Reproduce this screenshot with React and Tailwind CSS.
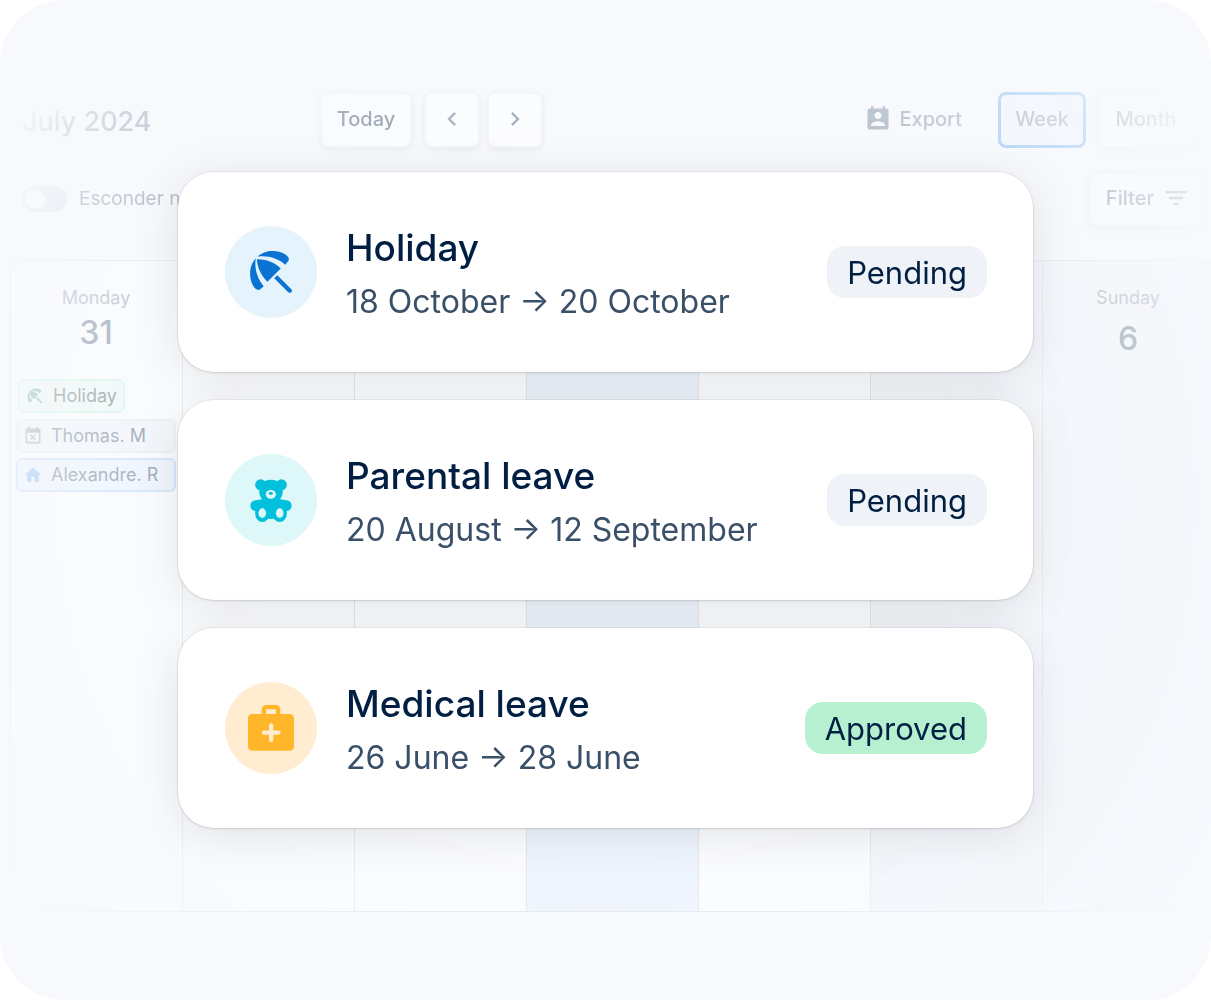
import {
  MdBeachAccess,
  MdChevronLeft,
  MdChevronRight,
  MdEventBusy,
  MdFilterList,
  MdHome,
  MdPermContactCalendar,
} from "react-icons/md";

const days = [
  { name: "Monday", date: "31", tone: "bg-white" },
  { tone: "bg-white" },
  { tone: "bg-white" },
  { tone: "bg-[#e9f2fe]" },
  { tone: "bg-white" },
  { tone: "bg-[#f1f4f9]" },
  { name: "Sunday", date: "6", tone: "bg-[#f1f4f9]" },
];

const events = [
  {
    label: "Holiday",
    icon: MdBeachAccess,
    box: "mx-0.5 mb-px self-start border-[#c3f3da] bg-[#e9fcf2] text-[#1f3a34]",
    iconColor: "text-[#2f9464]",
  },
  {
    label: "Thomas. M",
    icon: MdEventBusy,
    box: "border-[#e2e8ef] bg-[#eff3f8] text-[#344a63]",
    iconColor: "text-[#6b7c90]",
  },
  {
    label: "Alexandre. R",
    icon: MdHome,
    box: "border-[#aed2fb] bg-[#e9f2fe] text-[#344a63]",
    iconColor: "text-[#4f9bf5]",
  },
];

const requests = [
  {
    title: "Holiday",
    from: "18 October",
    to: "20 October",
    status: "Pending",
    pill: "bg-[#eff3f8]",
    circle: "bg-[#e5f3fd]",
    icon: UmbrellaIcon,
  },
  {
    title: "Parental leave",
    from: "20 August",
    to: "12 September",
    status: "Pending",
    pill: "bg-[#eff3f8]",
    circle: "bg-[#def7f9]",
    icon: TeddyIcon,
  },
  {
    title: "Medical leave",
    from: "26 June",
    to: "28 June",
    status: "Approved",
    pill: "bg-[#b7f0d0]",
    circle: "bg-[#ffecd1]",
    icon: MedicalIcon,
  },
];

function UmbrellaIcon() {
  return (
    <svg viewBox="0 0 123 123" className="size-[42px] fill-[#0b73d1]" aria-hidden="true">
      <path d="M20 24C44 23 70 31 90 51L51 90C31 70 21 46 20 24Z" />
      <path d="M22 17C44 -5 84 -4 106 12Q119 22 111 31L103 40C82 22 52 12 22 17Z" />
      <path d="M17 22C-5 44 -4 84 12 106Q22 119 31 111L40 103C22 82 12 52 17 22Z" />
      <path d="M80 71L121 112Q125 117 121 121Q117 124 112 121L71 80Z" />
    </svg>
  );
}

function TeddyIcon() {
  return (
    <svg viewBox="0 0 123 126" className="h-[43px] w-[42px] fill-[#00c0dc]" aria-hidden="true">
      <circle cx="31" cy="17" r="16" />
      <circle cx="92" cy="17" r="16" />
      <path d="M61 2C82 2 96 16 96 36C96 46 93 51 88 59L106 62A16 16 0 0 1 106 94L94 94L90 112Q61 122 33 112L29 94L17 94A16 16 0 0 1 17 62L35 59C30 51 27 46 27 36C27 16 41 2 61 2Z" />
      <ellipse cx="36" cy="100" rx="21" ry="26" />
      <ellipse cx="87" cy="100" rx="21" ry="26" />
      <g className="fill-[#def7f9]">
        <ellipse cx="36" cy="100" rx="11" ry="14" />
        <ellipse cx="87" cy="100" rx="11" ry="14" />
        <ellipse cx="61" cy="45" rx="15" ry="13" />
      </g>
      <ellipse cx="61" cy="42" rx="6" ry="5" />
    </svg>
  );
}

function MedicalIcon() {
  return (
    <svg viewBox="0 0 139 138" className="size-[46px]" fill="none" aria-hidden="true">
      <rect y="27" width="139" height="111" rx="13" fill="#ffb629" />
      <path d="M48 30V14Q48 6 56 6H83Q91 6 91 14V30" stroke="#ffb629" strokeWidth="13" />
      <path d="M70 61V105M48 83H92" stroke="#ffecd1" strokeWidth="13" strokeLinecap="round" />
    </svg>
  );
}

function ToolbarButton({ className = "", children, ...rest }) {
  return (
    <button
      type="button"
      className={`flex h-14 items-center justify-center rounded-lg border-2 border-[#eef1f6] bg-white pb-0.5 text-xl font-medium shadow-[0_2px_6px_rgba(0,0,0,0.12)] ${className}`}
      {...rest}
    >
      {children}
    </button>
  );
}

function Toolbar() {
  return (
    <>
      <div className="flex items-center pr-[17px] pl-[22px]">
        <h1 className="w-[298px] pt-1 text-[27px] font-medium">July 2024</h1>
        <ToolbarButton className="w-[92px]">Today</ToolbarButton>
        <ToolbarButton className="ml-3 w-14" aria-label="Previous week">
          <MdChevronLeft className="size-7 text-[#5f738c]" />
        </ToolbarButton>
        <ToolbarButton className="ml-[7px] w-14" aria-label="Next week">
          <MdChevronRight className="size-7 text-[#5f738c]" />
        </ToolbarButton>
        <button
          type="button"
          className="ml-auto flex items-center gap-[7px] pb-0.5 text-xl font-medium text-[#6b7c90]"
        >
          <MdPermContactCalendar className="size-7" />
          Export
        </button>
        <button
          type="button"
          className="ml-9 h-14 w-[88px] rounded-lg border-3 border-[#3a93ee] bg-[#edf5fe] pb-0.5 text-xl font-medium text-[#5a6d84]"
        >
          Week
        </button>
        <ToolbarButton className="ml-3 w-[96px]">Month</ToolbarButton>
      </div>
      <div className="mt-[23px] flex items-center justify-between pr-2 pl-[22px]">
        <label className="flex items-center gap-3 text-[19px]">
          <input
            type="checkbox"
            className="h-[26px] w-[45px] appearance-none rounded-full bg-[#c9d4e0] p-[3px] before:block before:size-5 before:rounded-full before:bg-white"
          />
          Esconder n
        </label>
        <ToolbarButton className="w-[114px] gap-2 pl-1">
          Filter
          <MdFilterList className="size-7" />
        </ToolbarButton>
      </div>
    </>
  );
}

function EventChip({ event }) {
  const Icon = event.icon;
  return (
    <li className={`flex h-[34px] items-center gap-2 rounded-md border-2 pr-1.5 pl-[5px] text-lg ${event.box}`}>
      <Icon className={`size-5 ${event.iconColor}`} />
      {event.label}
    </li>
  );
}

function Calendar() {
  return (
    <div className="-mr-[5px] ml-2.5 grid flex-1 grid-cols-7 overflow-hidden rounded-t-xl border border-[#d5dae4]">
      {days.map((day, index) => (
        <div key={index} className={`border-r border-[#d5dae8] pt-[23px] pr-[6px] pl-[5px] ${day.tone}`}>
          {day.name && (
            <div className="text-center">
              <div className="text-lg text-[#6b7c90]">{day.name}</div>
              <div className={`pt-px text-[32px] leading-10 font-medium ${index === 6 ? "mt-1.5" : ""}`}>
                {day.date}
              </div>
            </div>
          )}
          {index === 0 && (
            <ul className="mt-[26px] flex flex-col gap-[5px]">
              {events.map((event) => (
                <EventChip key={event.label} event={event} />
              ))}
            </ul>
          )}
        </div>
      ))}
    </div>
  );
}

function RequestCard({ request }) {
  const Icon = request.icon;
  return (
    <li className="flex h-50 items-center rounded-[36px] bg-white pr-[46px] pl-[47px] shadow-[0_0_0_1px_rgba(0,0,0,0.05),0_1px_3px_rgba(0,0,0,0.1),0_8px_48px_rgba(0,0,0,0.1)]">
      <div className={`flex size-[92px] shrink-0 items-center justify-center rounded-full ${request.circle}`}>
        <Icon />
      </div>
      <div className="ml-[29px] flex-1 pt-[5px] whitespace-nowrap">
        <h2 className="text-[37px] leading-[54px] font-medium text-[#001f42]">{request.title}</h2>
        <p className="text-[32px] leading-[54px] text-[#3a4f68]">
          {request.from} → {request.to}
        </p>
      </div>
      <span className={`rounded-[18px] px-5 pt-0.5 text-[31px] leading-[50px] text-[#001f42] ${request.pill}`}>
        {request.status}
      </span>
    </li>
  );
}

export default function App() {
  return (
    <main className="relative flex min-h-screen flex-col overflow-hidden rounded-[64px] bg-[#f7f9fd] font-['Inter',sans-serif]">
      {/* calendar fades out towards the corners */}
      <div className="flex flex-1 flex-col pt-[92px] pb-[88px] text-[#344a63] [mask-image:radial-gradient(circle_at_center,rgba(0,0,0,0.6)_45%,rgba(0,0,0,0.44)_57%,rgba(0,0,0,0.3)_69%,rgba(0,0,0,0.2)_78%,transparent_90%)]">
        <Toolbar />
        <div className="mt-[33px] flex flex-1">
          <Calendar />
        </div>
      </div>
      <ul className="absolute inset-x-[178px] top-[172px] flex flex-col gap-7">
        {requests.map((request) => (
          <RequestCard key={request.title} request={request} />
        ))}
      </ul>
    </main>
  );
}
